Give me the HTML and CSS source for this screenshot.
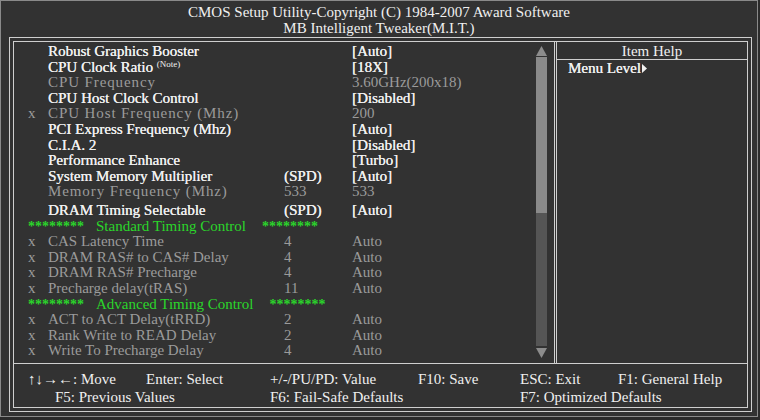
FILE: index.html
```html
<!DOCTYPE html>
<html lang="en">
<head>
    <meta charset="UTF-8">
    <title>CMOS Setup Utility - MB Intelligent Tweaker</title>
    <link rel="stylesheet" href="styles.css">
</head>
<body>

    <div class="screen">
        <div class="title">
            <div>CMOS Setup Utility-Copyright (C) 1984-2007 Award Software</div>
            <div>MB Intelligent Tweaker(M.I.T.)</div>
        </div>

        <div class="frame">
            <div class="frame-inner">
                <div class="main">

                    <!-- Settings list -->
                    <div class="list">
                        <div class="row"><span class="mark"></span><span class="label">Robust Graphics Booster</span><span class="mid"></span><span class="val">[Auto]</span></div>
                        <div class="row"><span class="mark"></span><span class="label">CPU Clock Ratio <sup class="note">(Note)</sup></span><span class="mid"></span><span class="val">[18X]</span></div>
                        <div class="row dim"><span class="mark"></span><span class="label wide">CPU Frequency</span><span class="mid"></span><span class="val">3.60GHz(200x18)</span></div>
                        <div class="row"><span class="mark"></span><span class="label">CPU Host Clock Control</span><span class="mid"></span><span class="val">[Disabled]</span></div>
                        <div class="row dim"><span class="mark">x</span><span class="label wide">CPU Host Frequency (Mhz)</span><span class="mid"></span><span class="val">200</span></div>
                        <div class="row"><span class="mark"></span><span class="label">PCI Express Frequency (Mhz)</span><span class="mid"></span><span class="val">[Auto]</span></div>
                        <div class="row"><span class="mark"></span><span class="label">C.I.A. 2</span><span class="mid"></span><span class="val">[Disabled]</span></div>
                        <div class="row"><span class="mark"></span><span class="label">Performance Enhance</span><span class="mid"></span><span class="val">[Turbo]</span></div>
                        <div class="row"><span class="mark"></span><span class="label">System Memory Multiplier</span><span class="mid">(SPD)</span><span class="val">[Auto]</span></div>
                        <div class="row dim"><span class="mark"></span><span class="label wide">Memory Frequency (Mhz)</span><span class="mid">533</span><span class="val">533</span></div>
                        <div class="row spaced"><span class="mark"></span><span class="label">DRAM Timing Selectable</span><span class="mid">(SPD)</span><span class="val">[Auto]</span></div>

                        <div class="sep"><span class="stars">********</span><span>Standard Timing Control</span><span class="stars">********</span></div>
                        <div class="row dim"><span class="mark">x</span><span class="label">CAS Latency Time</span><span class="mid">4</span><span class="val">Auto</span></div>
                        <div class="row dim"><span class="mark">x</span><span class="label">DRAM RAS# to CAS# Delay</span><span class="mid">4</span><span class="val">Auto</span></div>
                        <div class="row dim"><span class="mark">x</span><span class="label">DRAM RAS# Precharge</span><span class="mid">4</span><span class="val">Auto</span></div>
                        <div class="row dim"><span class="mark">x</span><span class="label">Precharge delay(tRAS)</span><span class="mid">11</span><span class="val">Auto</span></div>

                        <div class="sep"><span class="stars">********</span><span>Advanced Timing Control</span><span class="stars">********</span></div>
                        <div class="row dim"><span class="mark">x</span><span class="label">ACT to ACT Delay(tRRD)</span><span class="mid">2</span><span class="val">Auto</span></div>
                        <div class="row dim"><span class="mark">x</span><span class="label">Rank Write to READ Delay</span><span class="mid">2</span><span class="val">Auto</span></div>
                        <div class="row dim"><span class="mark">x</span><span class="label">Write To Precharge Delay</span><span class="mid">4</span><span class="val">Auto</span></div>
                    </div>

                    <!-- Scrollbar -->
                    <div class="scrollbar">
                        <svg class="arrow" width="11" height="10" viewBox="0 0 11 10"><polygon points="5.5,0 11,10 0,10"/></svg>
                        <div class="thumb"></div>
                        <div class="track"></div>
                        <svg class="arrow down" width="11" height="10" viewBox="0 0 11 10"><polygon points="0,0 11,0 5.5,10"/></svg>
                    </div>

                    <!-- Item help -->
                    <div class="help">
                        <div class="help-head">Item Help</div>
                        <div class="help-body">Menu Level<svg class="pointer" width="5" height="9" viewBox="0 0 5 9"><polygon points="0,0 5,4.5 0,9"/></svg></div>
                    </div>
                </div>

                <!-- Key legend -->
                <div class="keys">
                    <span>↑↓→←: Move</span>
                    <span>Enter: Select</span>
                    <span>+/-/PU/PD: Value</span>
                    <span>F10: Save</span>
                    <span>ESC: Exit</span>
                    <span>F1: General Help</span>
                    <span class="f5">F5: Previous Values</span>
                    <span class="f6">F6: Fail-Safe Defaults</span>
                    <span class="f7">F7: Optimized Defaults</span>
                </div>
            </div>
        </div>
    </div>

</body>
</html>
```

FILE: styles.css
```css
* {
    margin: 0;
    padding: 0;
    box-sizing: border-box;
}

body {
    background: #2b2b2b;
    font-family: "Liberation Serif", "Times New Roman", serif;
    font-size: 15px;
    color: #f0f0f0;
}

/* Whole BIOS screen */
.screen {
    width: 758px;
    height: 417px;
    background: #323232;
    box-shadow: inset 0 0 0 1px #8a8a8a;
}

.title {
    height: 37px;
    padding-top: 4px;
    line-height: 16px;
    text-align: center;
}

/* Double line frame */
.frame {
    width: 743px;
    height: 375px;
    margin-left: 9px;
    padding: 3px;
    border: 1px solid #cfcfcf;
}

.frame-inner {
    height: 100%;
    border: 1px solid #cfcfcf;
    display: flex;
    flex-direction: column;
}

.main {
    height: 321px;
    display: flex;
}

/* Settings list */
.list {
    flex: 1;
    padding: 2px 0 0 14px;
}

.row {
    display: grid;
    grid-template-columns: 20px 236px 68px 1fr;
    height: 15.6px;
    line-height: 15.6px;
    white-space: nowrap;
    text-shadow: 0.2px 0 0 currentColor;
}

.row.dim {
    color: #9b9b9b;
    text-shadow: none;
}

.row.spaced {
    margin-top: 3px;
}

.label.wide {
    letter-spacing: 0.9px;
}

.note {
    font-size: 9px;
    vertical-align: 5px;
    line-height: 0;
    text-shadow: none;
}

.sep {
    display: flex;
    gap: 12px;
    height: 15.6px;
    line-height: 15.6px;
    color: #2bd62b;
    white-space: nowrap;
}

.sep .stars {
    font-weight: bold;
    font-size: 14px;
}

.sep .stars:last-child {
    margin-left: 4px;
}

/* Scrollbar */
.scrollbar {
    width: 11px;
    margin-right: 7px;
    padding: 4px 0 5px;
    display: flex;
    flex-direction: column;
}

.arrow {
    display: block;
    fill: #8c8c8c;
}

.arrow.down {
    margin-top: 2px;
}

.thumb {
    height: 156px;
    margin-top: 1px;
    background: #8a8a8a;
}

.track {
    flex: 1;
    background: #555;
}

/* Item help panel */
.help {
    width: 193px;
    border-left: 3px double #cfcfcf;
}

.help-head {
    height: 18px;
    padding-top: 1px;
    line-height: 17px;
    text-align: center;
    border-bottom: 1px solid #cfcfcf;
}

.help-body {
    padding-left: 11px;
    line-height: 16px;
    text-shadow: 0.2px 0 0 currentColor;
}

.pointer {
    margin-left: 1px;
    fill: #f0f0f0;
}

/* Key legend */
.keys {
    flex: 1;
    border-top: 1px solid #cfcfcf;
    padding: 8px 0 0 14px;
    display: grid;
    grid-template-columns: 118px 124px 148px 102px 98px 1fr;
    line-height: 15px;
    white-space: nowrap;
}

.keys .f5 {
    grid-column: 1 / 3;
    padding-left: 27px;
}

.keys .f6 {
    grid-column: 3 / 5;
}

.keys .f7 {
    grid-column: 5 / 7;
}
```
